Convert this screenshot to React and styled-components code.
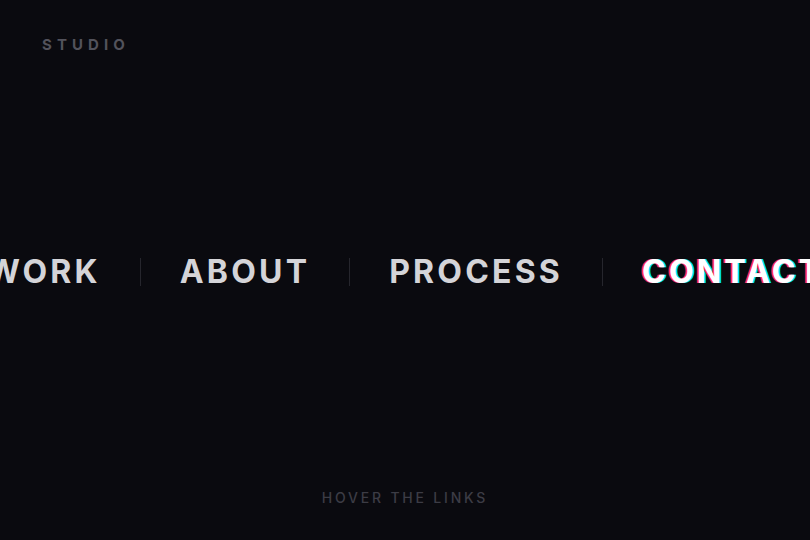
import styled, { createGlobalStyle } from 'styled-components';
import { Fragment } from 'react';

const GlobalStyle = createGlobalStyle`
  html, body, #root {
    margin: 0;
    height: 100%;
  }
  body {
    background: #0a0a0f;
    font-family: Inter, "Noto Sans", sans-serif;
  }
`;

const Page = styled.div`
  height: 100vh;
  display: grid;
  grid-template-columns: minmax(0, 1fr);
  grid-template-rows: 1fr auto 1fr;
  overflow: hidden;
  background: #0a0a0f;
`;

const Header = styled.header`
  padding: 34px 42px 0;
`;

const Brand = styled.span`
  font-size: 15px;
  font-weight: 700;
  letter-spacing: 0.34em;
  color: #52525b;
`;

const Nav = styled.nav`
  display: flex;
  align-items: center;
  justify-content: center;
  gap: 39px;
  min-width: 0;
  padding-top: 3px;
  white-space: nowrap;
`;

const Link = styled.a`
  font-size: 32px;
  font-weight: 700;
  letter-spacing: 0.1em;
  line-height: 1;
  color: ${({ $active }) => ($active ? '#ffffff' : '#d4d4d8')};
  text-shadow: ${({ $active }) =>
    $active ? '-2px 0 #ff2a55, 2px 0 #00e5ff' : 'none'};
  text-decoration: none;
  flex-shrink: 0;
`;

const Divider = styled.span`
  width: 1px;
  height: 28px;
  background: #26262d;
  flex-shrink: 0;
`;

const Footer = styled.footer`
  display: flex;
  align-items: flex-end;
  justify-content: center;
  padding-bottom: 34px;
`;

const Hint = styled.span`
  font-size: 14px;
  font-weight: 500;
  letter-spacing: 0.2em;
  color: #3c3c45;
`;

const links = ['WORK', 'ABOUT', 'PROCESS', 'CONTACT'];

export default function App() {
  return (
    <>
      <GlobalStyle />
      <Page>
        <Header>
          <Brand>STUDIO</Brand>
        </Header>
        <Nav>
          {links.map((label, i) => (
            <Fragment key={label}>
              {i > 0 && <Divider />}
              <Link href="#" $active={label === 'CONTACT'}>
                {label}
              </Link>
            </Fragment>
          ))}
        </Nav>
        <Footer>
          <Hint>HOVER THE LINKS</Hint>
        </Footer>
      </Page>
    </>
  );
}
